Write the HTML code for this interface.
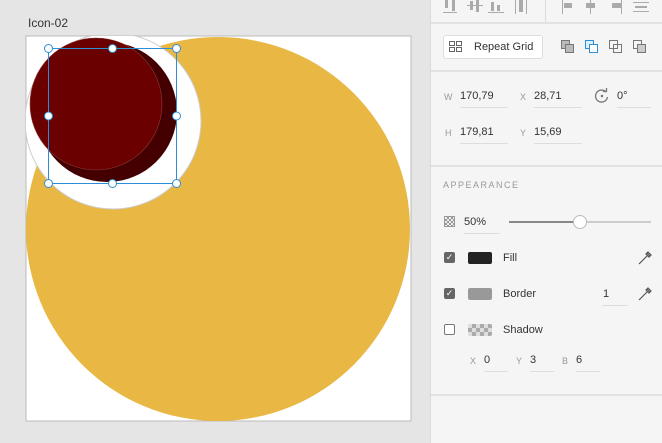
<!DOCTYPE html>
<html><head><style>
body{margin:0;width:662px;height:443px;overflow:hidden;background:#e5e5e5;font-family:"Liberation Sans",sans-serif;position:relative}
.a{position:absolute}
.p{left:430px;top:0;width:232px;height:443px;background:#f5f5f5;border-left:1px solid #dadada}
.sep{position:absolute;left:431px;width:231px;height:2px;background:#e2e2e2}
.t{position:absolute;font-size:11px;color:#333}
.l{position:absolute;font-size:9px;color:#999}
.u{position:absolute;height:1px;background:#ddd}
.cb{position:absolute;width:11px;height:11px;border-radius:2px}
</style></head><body>
<div class="a" style="left:28px;top:16px;font-size:12px;color:#333">Icon-02</div>
<svg class="a" style="left:0;top:0" width="430" height="443">
<defs><clipPath id="c"><rect x="26" y="36" width="385" height="385"/></clipPath></defs>
<rect x="26" y="36" width="385" height="385" fill="#fff" stroke="#bbb"/>
<g clip-path="url(#c)">
<circle cx="218" cy="229" r="192" fill="#e9b744"/>
<circle cx="113" cy="121" r="88" fill="#fff" stroke="#ccc"/>
<circle cx="107" cy="112" r="70" fill="#440000"/>
<circle cx="96" cy="104" r="66" fill="#6b0000" stroke="#8a3a3a" stroke-width="0.6"/>
</g>
<rect x="48.5" y="48.5" width="128" height="135" fill="none" stroke="#2d8ed6"/>
<g fill="#fff" stroke="#2d8ed6">
<circle cx="48.5" cy="48.5" r="4"/><circle cx="112.5" cy="48.5" r="4"/><circle cx="176.5" cy="48.5" r="4"/>
<circle cx="48.5" cy="116" r="4"/><circle cx="176.5" cy="116" r="4"/>
<circle cx="48.5" cy="183.5" r="4"/><circle cx="112.5" cy="183.5" r="4"/><circle cx="176.5" cy="183.5" r="4"/>
</g></svg>
<div class="a p"></div>
<svg class="a" style="left:431px;top:0" width="231" height="20" fill="#aaa">
<rect x="14" y="0" width="3" height="8"/><rect x="21" y="0" width="3" height="11"/><rect x="12" y="12" width="14" height="1"/>
<rect x="36" y="5" width="16" height="1"/><rect x="39" y="1" width="3" height="9"/><rect x="45" y="0" width="3" height="12"/>
<rect x="60" y="2" width="3" height="9"/><rect x="66" y="5" width="3" height="6"/><rect x="57" y="12" width="16" height="1"/>
<rect x="84" y="0" width="1" height="14"/><rect x="88" y="0" width="4" height="12"/><rect x="95" y="0" width="1" height="14"/>
<rect x="131" y="0" width="1" height="14"/><rect x="133" y="3" width="8" height="5"/>
<rect x="159" y="0" width="1" height="14"/><rect x="155" y="3" width="9" height="5"/>
<rect x="190" y="0" width="1" height="14"/><rect x="181" y="3" width="9" height="5"/>
<rect x="202" y="2" width="16" height="1"/><rect x="204" y="6" width="12" height="2"/><rect x="202" y="11" width="16" height="1"/>
</svg>
<div class="a" style="left:545px;top:0;width:1px;height:22px;background:#ddd"></div>
<div class="sep" style="top:22px"></div>
<div class="a" style="left:443px;top:35px;width:98px;height:22px;background:#fff;border:1px solid #ddd;border-radius:3px"></div>
<svg class="a" style="left:449px;top:41px" width="14" height="12" fill="none" stroke="#666"><rect x=".5" y=".5" width="5" height="4"/><rect x="7.5" y=".5" width="5" height="4"/><rect x=".5" y="6.5" width="5" height="4"/><rect x="7.5" y="6.5" width="5" height="4"/></svg>
<div class="t" style="left:474px;top:41px">Repeat Grid</div>
<svg class="a" style="left:560px;top:38px" width="95" height="18" stroke-width="1">
<rect x="1.5" y="2.5" width="8" height="8" fill="#bbb" stroke="#777"/><rect x="5.5" y="6.5" width="8" height="8" fill="#bbb" stroke="#777"/>
<rect x="25.5" y="2.5" width="8" height="8" fill="#dcefff" stroke="#2d8ed6"/><rect x="29.5" y="6.5" width="8" height="8" fill="#fff" stroke="#2d8ed6"/>
<rect x="49.5" y="2.5" width="8" height="8" fill="none" stroke="#777"/><rect x="53.5" y="6.5" width="8" height="8" fill="none" stroke="#777"/>
<rect x="73.5" y="2.5" width="8" height="8" fill="none" stroke="#777"/><rect x="77.5" y="6.5" width="8" height="8" fill="#ccc" stroke="#777"/>
</svg>
<div class="sep" style="top:70px"></div>
<div class="l" style="left:444px;top:92px">W</div><div class="t" style="left:460px;top:90px">170,79</div><div class="u" style="left:460px;top:107px;width:48px"></div>
<div class="l" style="left:520px;top:92px">X</div><div class="t" style="left:534px;top:90px">28,71</div><div class="u" style="left:534px;top:107px;width:48px"></div>
<svg class="a" style="left:594px;top:88px" width="16" height="16" fill="none" stroke="#777" stroke-width="1.3"><path d="M12 4A6 6 0 1 0 13.5 9"/><path d="M9 3.5h3.5V0" /><circle cx="8" cy="8" r=".6" fill="#777"/></svg>
<div class="t" style="left:617px;top:90px">0°</div><div class="u" style="left:617px;top:107px;width:34px"></div>
<div class="l" style="left:445px;top:128px">H</div><div class="t" style="left:460px;top:126px">179,81</div><div class="u" style="left:460px;top:143px;width:48px"></div>
<div class="l" style="left:520px;top:128px">Y</div><div class="t" style="left:534px;top:126px">15,69</div><div class="u" style="left:534px;top:143px;width:48px"></div>
<div class="sep" style="top:165px"></div>
<div class="l" style="left:443px;top:180px;letter-spacing:1.5px;color:#999">APPEARANCE</div>
<div class="a" style="left:444px;top:216px;width:11px;height:11px;background:repeating-conic-gradient(#999 0 25%,#eee 0 50%) 0 0/4px 4px;border:1px solid #999;box-sizing:border-box"></div>
<div class="t" style="left:464px;top:216px">50%</div><div class="u" style="left:464px;top:233px;width:36px"></div>
<div class="a" style="left:509px;top:221px;width:71px;height:2px;background:#888"></div>
<div class="a" style="left:580px;top:221px;width:71px;height:2px;background:#ccc"></div>
<div class="a" style="left:573px;top:215px;width:12px;height:12px;border-radius:50%;background:#fff;border:1px solid #bbb"></div>
<div class="cb" style="left:444px;top:252px;background:#666;color:#fff;font-size:9px;text-align:center;line-height:11px">✓</div>
<div class="a" style="left:468px;top:252px;width:24px;height:12px;background:#222;border-radius:2px"></div>
<div class="t" style="left:503px;top:252px">Fill</div>
<div class="cb" style="left:444px;top:288px;background:#666;color:#fff;font-size:9px;text-align:center;line-height:11px">✓</div>
<div class="a" style="left:468px;top:288px;width:24px;height:12px;background:#999;border-radius:2px"></div>
<div class="t" style="left:503px;top:288px">Border</div>
<div class="t" style="left:603px;top:288px">1</div><div class="u" style="left:602px;top:305px;width:26px"></div>
<svg class="a" style="left:637px;top:250px" width="16" height="16" fill="none" stroke="#555" stroke-width="1.2"><path d="M2 14l8-8M10 3l3 3M11 2l3 3-2 2-3-3z"/></svg>
<svg class="a" style="left:637px;top:286px" width="16" height="16" fill="none" stroke="#555" stroke-width="1.2"><path d="M2 14l8-8M10 3l3 3M11 2l3 3-2 2-3-3z"/></svg>
<div class="cb" style="left:444px;top:324px;border:1px solid #777;background:#fff;box-sizing:border-box"></div>
<div class="a" style="left:468px;top:324px;width:24px;height:12px;background:repeating-conic-gradient(#aaa 0 25%,#ddd 0 50%) 0 0/8px 8px;border-radius:2px"></div>
<div class="t" style="left:503px;top:324px">Shadow</div>
<div class="l" style="left:470px;top:356px">X</div><div class="t" style="left:484px;top:354px">0</div><div class="u" style="left:484px;top:371px;width:24px"></div>
<div class="l" style="left:516px;top:356px">Y</div><div class="t" style="left:530px;top:354px">3</div><div class="u" style="left:530px;top:371px;width:24px"></div>
<div class="l" style="left:562px;top:356px">B</div><div class="t" style="left:576px;top:354px">6</div><div class="u" style="left:576px;top:371px;width:24px"></div>
<div class="sep" style="top:394px"></div>
</body></html>
